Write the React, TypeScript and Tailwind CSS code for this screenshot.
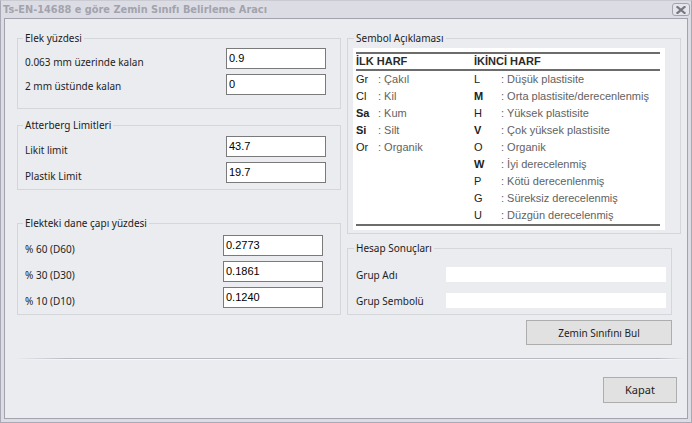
import React from "react";

function Group({
  title,
  legendMl,
  className,
  children,
}: {
  title: string;
  legendMl: string;
  className?: string;
  children: React.ReactNode;
}) {
  return (
    <fieldset className={`border border-[#d5d6da] m-0 p-0 min-w-0 ${className ?? ""}`}>
      <legend className={`${legendMl} px-[2px] text-[10px] leading-[14px] text-[#1b1b1b]`}>{title}</legend>
      {children}
    </fieldset>
  );
}

function Field({ value, className }: { value: string; className?: string }) {
  return (
    <div
      className={`h-[21px] w-[100px] bg-white border border-[#7a7a7a] pl-[2px] flex items-center font-['Liberation_Sans',sans-serif] text-[11px] text-black ${className ?? ""}`}
    >
      {value}
    </div>
  );
}

function Row({ label, value, mt, className }: { label: string; value: string; mt: string; className?: string }) {
  return (
    <div className={`flex justify-between items-start ${className ?? ""}`}>
      <span className={`${mt} text-[10px] leading-[14px] text-[#1e1e1e]`}>{label}</span>
      <Field value={value} />
    </div>
  );
}

const first = [
  { s: "Gr", d: ": Çakıl", b: false },
  { s: "Cl", d: ": Kil", b: false },
  { s: "Sa", d: ": Kum", b: true },
  { s: "Si", d: ": Silt", b: true },
  { s: "Or", d: ": Organik", b: false },
];

const second = [
  { s: "L", d: ": Düşük plastisite", b: false },
  { s: "M", d: ": Orta plastisite/derecenlenmiş", b: true },
  { s: "H", d: ": Yüksek plastisite", b: false },
  { s: "V", d: ": Çok yüksek plastisite", b: true },
  { s: "O", d: ": Organik", b: false },
  { s: "W", d: ": İyi derecelenmiş", b: true },
  { s: "P", d: ": Kötü derecenlenmiş", b: false },
  { s: "G", d: ": Süreksiz derecelenmiş", b: false },
  { s: "U", d: ": Düzgün derecelenmiş", b: false },
];

export default function App() {
  return (
    <div className="w-[692px] h-[423px] bg-[#dcdde4] border border-[#a8a9b5] border-t-[#c9cad2] flex flex-col font-['Noto_Sans',sans-serif] overflow-hidden">
      {/* Title bar */}
      <div className="h-[17px] flex items-center justify-between pl-[2px] pr-[1px] shrink-0">
        <span className="font-['DejaVu_Sans',sans-serif] font-bold text-[9.8px] leading-[12px] text-[#a2a3ad] whitespace-nowrap">
          Ts-EN-14688 e göre Zemin Sınıfı Belirleme Aracı
        </span>
        <div className="w-[18px] h-[13px] rounded-[3px] border border-[#a3a4ad] bg-[#e4e5ea] flex items-center justify-center">
          <svg width="10" height="8" viewBox="0 0 10 8">
            <path d="M1.5 1 L8.5 7 M8.5 1 L1.5 7" stroke="#76777f" strokeWidth="2.2" strokeLinecap="square" />
          </svg>
        </div>
      </div>

      {/* Client */}
      <div className="flex-1 mx-[3px] mb-[3px] border border-[#a2a3af] bg-[#ebecf0] flex flex-col pt-[12px]">
        <div className="flex items-start pl-[12px]">
          {/* Left column */}
          <div className="w-[324px] flex flex-col">
            <Group title="Elek yüzdesi" legendMl="ml-[5px]">
              <div className="pt-[3px] pb-[13px] pl-[7px] pr-[14px] flex flex-col gap-[5px]">
                <Row label="0.063 mm üzerinde kalan" value="0.9" mt="mt-[7px]" />
                <Row label="2 mm üstünde kalan" value="0" mt="mt-[5px]" />
              </div>
            </Group>
            <Group title="Atterberg Limitleri" legendMl="ml-[5px]" className="mt-[9px]">
              <div className="pt-[4px] pb-[6px] pl-[7px] pr-[14px] flex flex-col gap-[5px]">
                <Row label="Likit limit" value="43.7" mt="mt-[7px]" />
                <Row label="Plastik Limit" value="19.7" mt="mt-[7px]" />
              </div>
            </Group>
            <Group title="Elekteki dane çapı yüzdesi" legendMl="ml-[5px]" className="mt-[26px]">
              <div className="pt-[5px] pb-[6px] pl-[7px] pr-[17px] flex flex-col gap-[5px]">
                <Row label="% 60 (D60)" value="0.2773" mt="mt-[7px]" />
                <Row label="% 30 (D30)" value="0.1861" mt="mt-[7px]" />
                <Row label="% 10 (D10)" value="0.1240" mt="mt-[7px]" />
              </div>
            </Group>
          </div>

          {/* Right column */}
          <div className="w-[334px] ml-[6px] flex flex-col">
            <Group title="Sembol Açıklaması" legendMl="ml-[6px]">
              <div className="pt-[3px] pb-[3px] pl-[5px]">
                <div className="w-[312px] bg-white pt-[4px] pb-[4px] pl-[3px] pr-[5px] font-['Liberation_Sans',sans-serif] text-[11px]">
                  <div className="h-[2px] bg-[#6c6c6c]" />
                  <div className="h-[15px] flex items-center font-bold text-[#2a2a2a]">
                    <span className="w-[118px]">İLK HARF</span>
                    <span>İKİNCİ HARF</span>
                  </div>
                  <div className="h-[2px] bg-[#6c6c6c]" />
                  <div className="flex">
                    <div className="w-[118px] flex flex-col">
                      {first.map((r) => (
                        <div key={r.s} className="h-[17px] flex items-center">
                          <span className={`w-[22px] text-[#222] ${r.b ? "font-bold" : ""}`}>{r.s}</span>
                          <span className="text-[#626262]">{r.d}</span>
                        </div>
                      ))}
                    </div>
                    <div className="flex flex-col">
                      {second.map((r) => (
                        <div key={r.s} className="h-[17px] flex items-center">
                          <span className={`w-[27px] text-[#222] ${r.b ? "font-bold" : ""}`}>{r.s}</span>
                          <span className="text-[#626262]">{r.d}</span>
                        </div>
                      ))}
                    </div>
                  </div>
                  <div className="h-[2px] bg-[#6c6c6c]" />
                </div>
              </div>
            </Group>

            <div className="w-[325px] flex flex-col">
              <Group title="Hesap Sonuçları" legendMl="ml-[6px]" className="mt-[7px]">
                <div className="pt-[12px] pb-[6px] pl-[8px] pr-[5px] flex flex-col gap-[11px]">
                  <div className="h-[15px] flex items-center justify-between">
                    <span className="text-[10px] leading-[14px] text-[#1e1e1e]">Grup Adı</span>
                    <div className="w-[220px] h-[15px] bg-white" />
                  </div>
                  <div className="h-[15px] flex items-center justify-between">
                    <span className="text-[10px] leading-[14px] text-[#1e1e1e]">Grup Sembolü</span>
                    <div className="w-[220px] h-[15px] bg-white" />
                  </div>
                </div>
              </Group>
              <div className="flex justify-end mt-[5px]">
                <button className="w-[146px] h-[25px] bg-[#e1e1e1] border border-[#adadad] text-[10px] leading-[14px] text-[#1e1e1e]">
                  Zemin Sınıfını Bul
                </button>
              </div>
            </div>
          </div>
        </div>

        {/* Separator */}
        <div className="mt-[13px] ml-[10px] mr-[2px] h-[1px] bg-[linear-gradient(to_right,transparent,#b7b8c3_8%,#b7b8c3_96%,transparent)]" />
        <div className="ml-[10px] mr-[2px] h-[1px] bg-[linear-gradient(to_right,transparent,#f7f7f9_8%,#f7f7f9_96%,transparent)]" />

        <div className="flex justify-end pr-[10px] mt-[17px]">
          <button className="w-[74px] h-[26px] bg-[#e1e1e1] border border-[#adadad] text-[11px] leading-[14px] text-[#1e1e1e]">
            Kapat
          </button>
        </div>
      </div>
    </div>
  );
}
